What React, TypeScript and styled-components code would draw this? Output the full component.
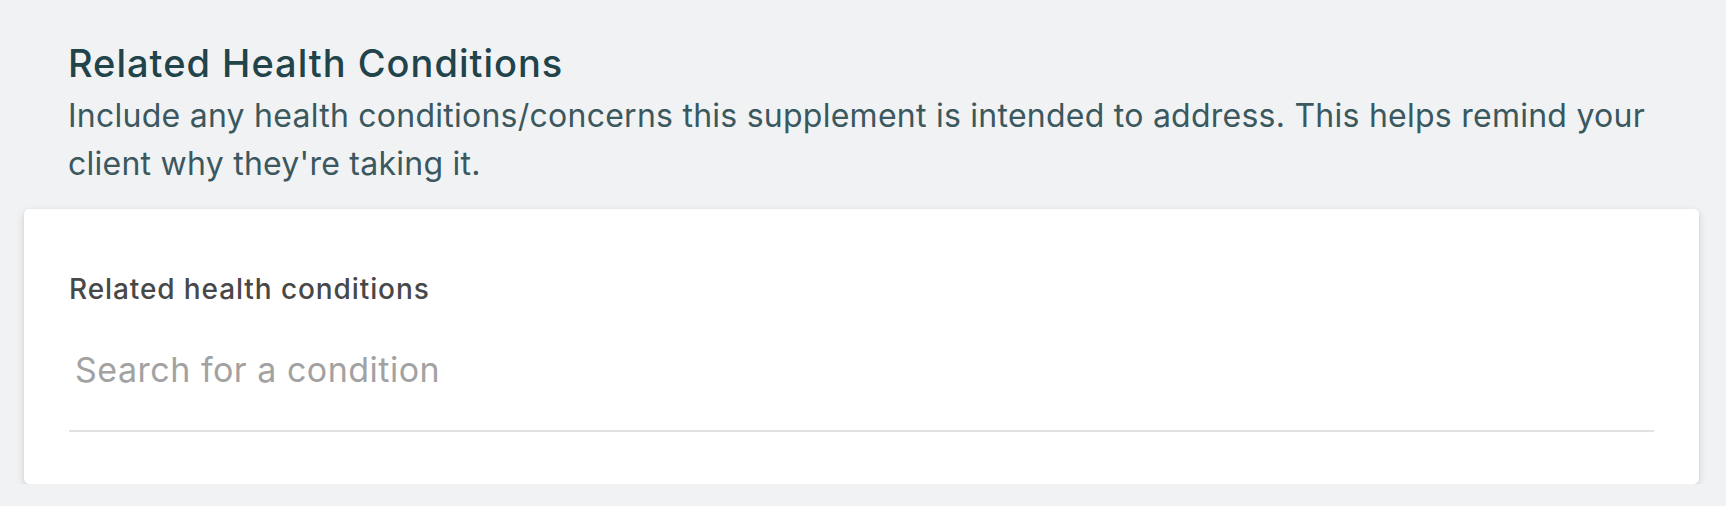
import React from "react";
import styled, { createGlobalStyle } from "styled-components";

const GlobalStyle = createGlobalStyle`
  html, body {
    margin: 0;
    padding: 0;
    background: #f1f2f4;
  }
  body {
    font-family: Inter, "Noto Sans", "Liberation Sans", sans-serif;
    -webkit-font-smoothing: antialiased;
  }
  * { box-sizing: border-box; }
`;

const Page = styled.main`
  width: 1726px;
  padding: 41px 27px 0 24px;
`;

const Header = styled.header`
  padding: 0 40px 0 44px;
`;

const Title = styled.h2`
  margin: 0;
  font-size: 38px;
  line-height: 44px;
  font-weight: 500;
  letter-spacing: 1px;
  color: #21434a;
`;

const Description = styled.p`
  margin: 7px 0 0;
  font-size: 32px;
  line-height: 48px;
  font-weight: 400;
  letter-spacing: 0.25px;
  color: #3a585e;
`;

const Card = styled.section`
  margin-top: 21px;
  background: #ffffff;
  border-radius: 5px;
  box-shadow: 0 3px 10px rgba(0, 0, 0, 0.12), 0 1px 3px rgba(0, 0, 0, 0.08);
  padding: 63px 45px 52px;
`;

const Label = styled.label`
  display: block;
  font-size: 28px;
  line-height: 34px;
  font-weight: 500;
  letter-spacing: 0.9px;
  color: #484848;
`;

const SearchInput = styled.input`
  display: block;
  width: 100%;
  margin-top: 44px;
  padding: 0 6px 41px;
  border: none;
  border-bottom: 2px solid #e2e2e2;
  outline: none;
  background: transparent;
  font-family: inherit;
  font-size: 34px;
  line-height: 39px;
  letter-spacing: 0.5px;
  color: #333;

  &::placeholder {
    color: #a2a2a2;
    opacity: 1;
  }
`;

export default function App() {
  return (
    <>
      <GlobalStyle />
      <Page>
        <Header>
          <Title>Related Health Conditions</Title>
          <Description>
            Include any health conditions/concerns this supplement is intended to address. This helps remind your
            client why they're taking it.
          </Description>
        </Header>
        <Card>
          <Label htmlFor="condition-search">Related health conditions</Label>
          <SearchInput id="condition-search" type="text" placeholder="Search for a condition" />
        </Card>
      </Page>
    </>
  );
}
